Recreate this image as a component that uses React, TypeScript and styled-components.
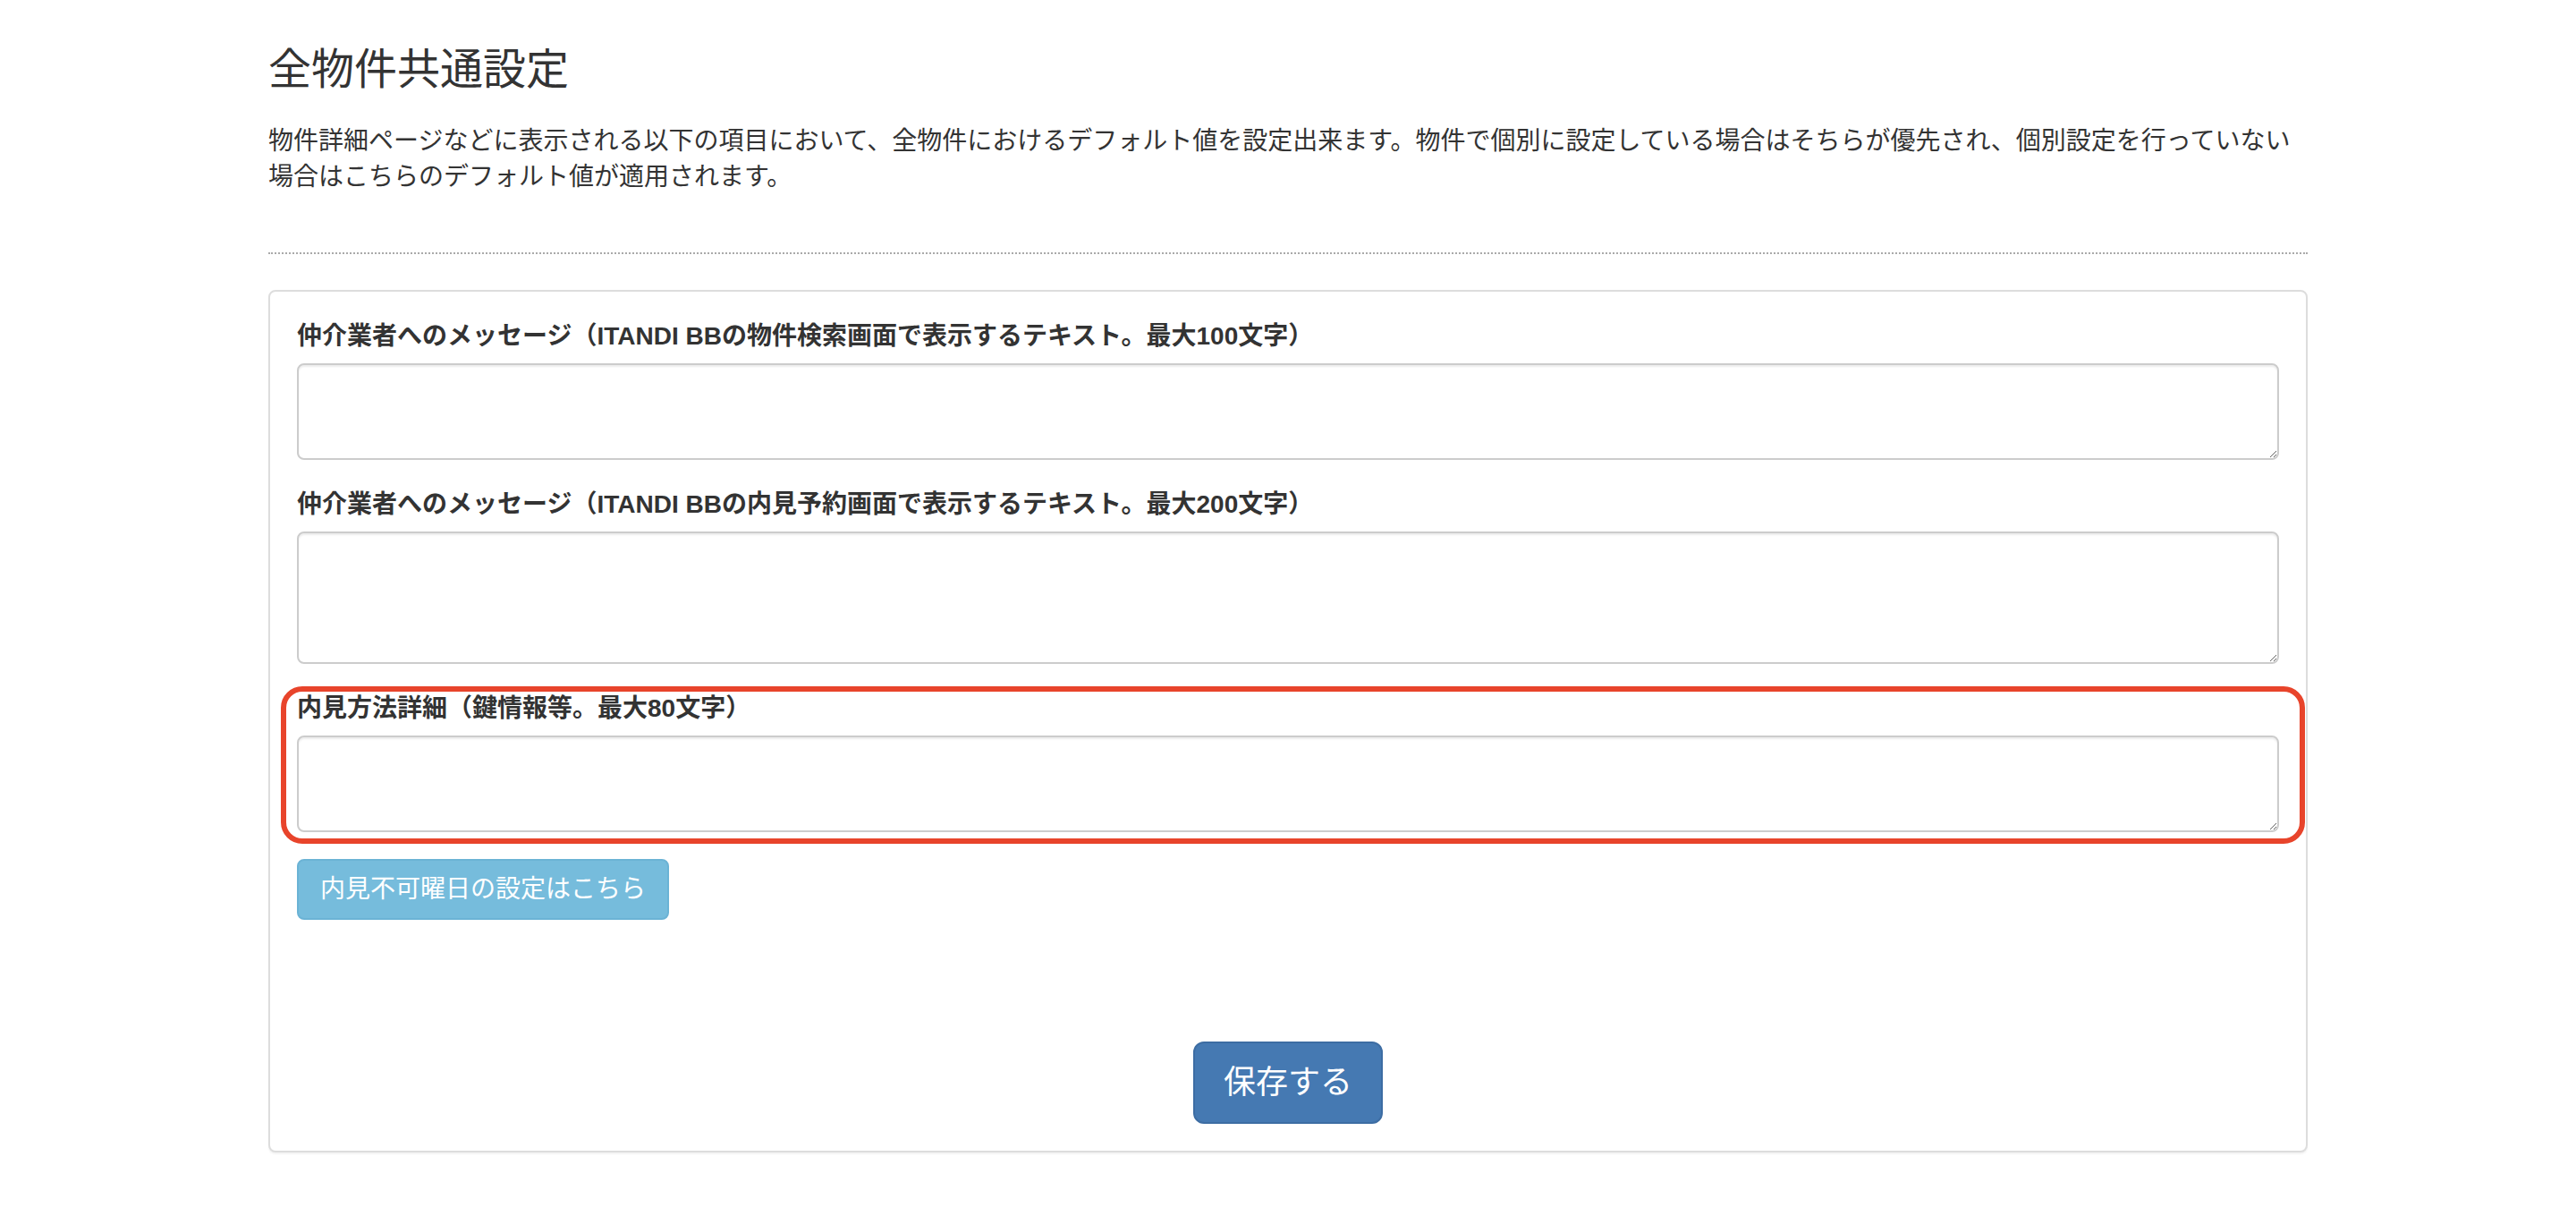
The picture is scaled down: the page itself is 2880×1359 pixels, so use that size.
import styled, { createGlobalStyle } from "styled-components";

const GlobalStyle = createGlobalStyle`
  html, body {
    margin: 0;
    padding: 0;
    background: #fff;
  }
  body {
    font-family: "Liberation Sans", "Noto Sans CJK JP", sans-serif;
    font-size: 28px;
    line-height: 40px;
    color: #333;
  }
  * {
    box-sizing: border-box;
  }
`;

const Container = styled.div`
  width: 2280px;
  margin: 0 auto;
  padding-bottom: 80px;
`;

const Title = styled.h3`
  margin: 52px 0 33px;
  font-size: 48px;
  line-height: 1.1;
  font-weight: 400;
  color: #333;
`;

const Description = styled.p`
  margin: 0 0 64px;
`;

const Divider = styled.hr`
  margin: 0 0 40px;
  border: 0;
  border-top: 2px dotted #aaa;
  height: 0;
`;

const Panel = styled.div`
  border: 2px solid #ddd;
  border-radius: 8px;
  box-shadow: 0 2px 2px rgba(0, 0, 0, 0.05);
  padding: 30px;
  background: #fff;
`;

const FormGroup = styled.div<{ $highlight?: boolean }>`
  position: relative;
  margin-bottom: 30px;

  ${(p) =>
    p.$highlight &&
    `
    &::after {
      content: "";
      position: absolute;
      left: -18px;
      right: -29px;
      top: -5px;
      bottom: -13px;
      border: 6px solid #e8442b;
      border-radius: 24px;
      pointer-events: none;
    }
  `}
`;

const Label = styled.label`
  display: block;
  margin-bottom: 10px;
  font-weight: 700;
  font-size: 28px;
  line-height: 40px;
`;

const TextArea = styled.textarea<{ $rows: number }>`
  display: block;
  width: 100%;
  height: ${(p) => p.$rows * 40 + 28}px;
  padding: 12px 24px;
  font-family: inherit;
  font-size: 28px;
  line-height: 40px;
  color: #555;
  background: #fff;
  border: 2px solid #ccc;
  border-radius: 8px;
  box-shadow: inset 0 2px 2px rgba(0, 0, 0, 0.075);
  resize: vertical;
  outline: none;
`;

const InfoButton = styled.button`
  display: inline-block;
  height: 68px;
  padding: 12px 24px;
  font-family: inherit;
  font-size: 28px;
  line-height: 40px;
  color: #fff;
  background: #76bcdc;
  border: 2px solid #6bb3d5;
  border-radius: 8px;
  cursor: pointer;
`;

const Footer = styled.div`
  display: flex;
  justify-content: center;
  margin-top: 136px;
`;

const SaveButton = styled.button`
  height: 92px;
  padding: 20px 32px;
  font-family: inherit;
  font-size: 36px;
  line-height: 48px;
  color: #fff;
  background: #4579b2;
  border: 2px solid #3d6da3;
  border-radius: 12px;
  cursor: pointer;
`;

const fields = [
  {
    label: "仲介業者へのメッセージ（ITANDI BBの物件検索画面で表示するテキスト。最大100文字）",
    rows: 2,
  },
  {
    label: "仲介業者へのメッセージ（ITANDI BBの内見予約画面で表示するテキスト。最大200文字）",
    rows: 3,
  },
  {
    label: "内見方法詳細（鍵情報等。最大80文字）",
    rows: 2,
    highlight: true,
  },
];

export default function App() {
  return (
    <>
      <GlobalStyle />
      <Container>
        <Title>全物件共通設定</Title>
        <Description>
          物件詳細ページなどに表示される以下の項目において、全物件におけるデフォルト値を設定出来ます。物件で個別に設定している場合はそちらが優先され、個別設定を行っていない場合はこちらのデフォルト値が適用されます。
        </Description>
        <Divider />
        <Panel>
          {fields.map((f, i) => (
            <FormGroup key={i} $highlight={f.highlight}>
              <Label>{f.label}</Label>
              <TextArea $rows={f.rows} />
            </FormGroup>
          ))}
          <InfoButton type="button">内見不可曜日の設定はこちら</InfoButton>
          <Footer>
            <SaveButton type="button">保存する</SaveButton>
          </Footer>
        </Panel>
      </Container>
    </>
  );
}
